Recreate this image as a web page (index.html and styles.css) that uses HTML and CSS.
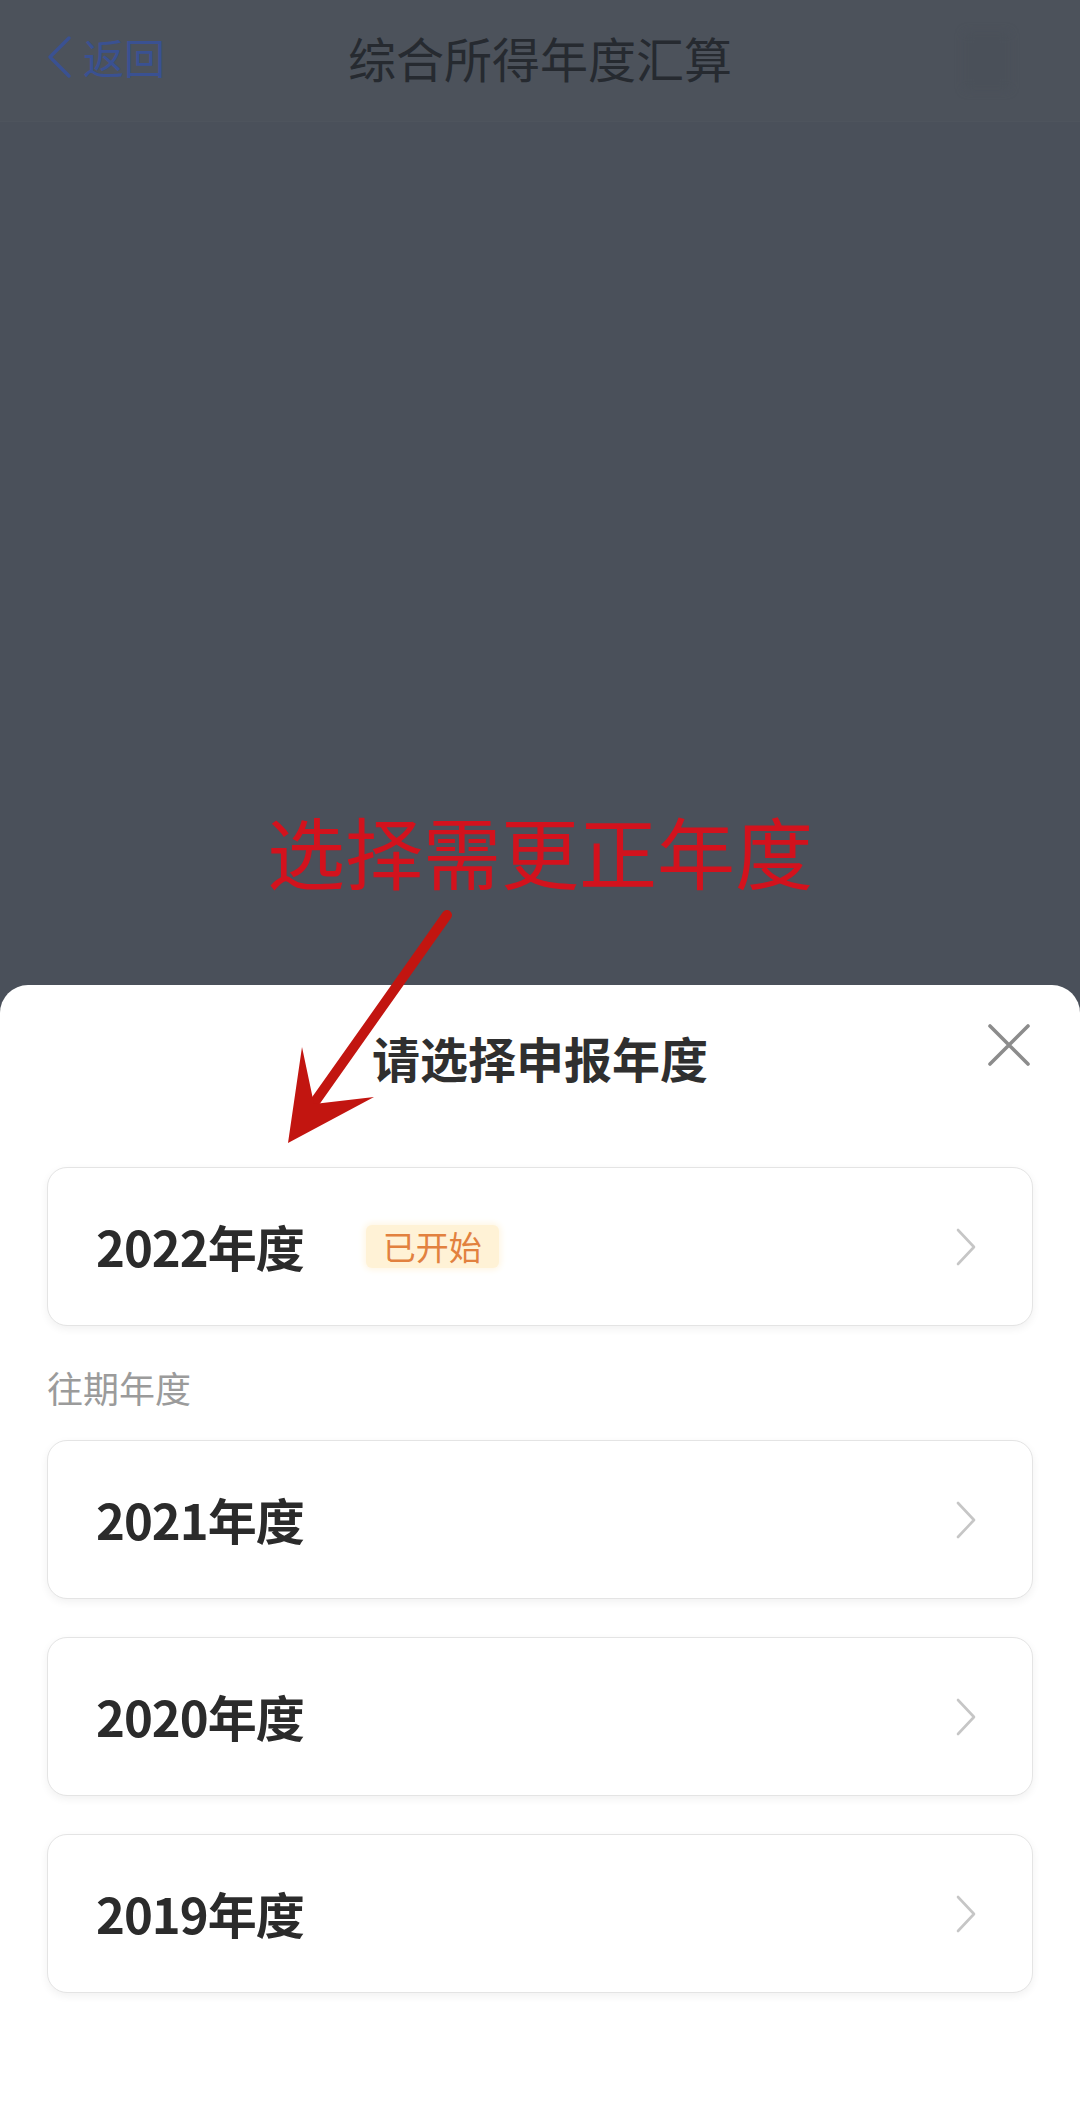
FILE: index.html
```html
<!DOCTYPE html>
<html lang="zh-CN">
<head>
<meta charset="utf-8">
<title>综合所得年度汇算</title>
<link rel="stylesheet" href="styles.css">
</head>
<body>
<div class="page">
  <header class="topbar">
    <div class="back">
      <svg class="back-icon" width="28" height="44" viewBox="0 0 28 44"><path d="M24 3 L5 22 L24 41" fill="none" stroke="currentColor" stroke-width="3.4" stroke-linecap="round" stroke-linejoin="round"/></svg>
      <span>返回</span>
    </div>
    <div class="nav-title">综合所得年度汇算</div>
    <div class="nav-right"><span class="ghost"></span></div>
  </header>
  <div class="dim">
    <div class="annotation">选择需更正年度</div>
  </div>
  <section class="sheet">
    <div class="sheet-head">
      <span></span>
      <h2 class="sheet-title">请选择申报年度</h2>
      <svg class="close" width="44" height="44" viewBox="0 0 44 44"><path d="M3 3 L41 41 M41 3 L3 41" stroke="#8c8c8c" stroke-width="3.6" stroke-linecap="round"/></svg>
    </div>
    <div class="card current">
      <div class="card-left"><span class="year">2022年度</span><span class="badge">已开始</span></div>
      <svg class="chev" width="20" height="38" viewBox="0 0 20 38"><path d="M2 2 L18 19 L2 36" fill="none" stroke="#c6c6c6" stroke-width="2.6" stroke-linecap="round" stroke-linejoin="round"/></svg>
    </div>
    <div class="section-label">往期年度</div>
    <div class="list">
      <div class="card">
        <div class="card-left"><span class="year">2021年度</span></div>
        <svg class="chev" width="20" height="38" viewBox="0 0 20 38"><path d="M2 2 L18 19 L2 36" fill="none" stroke="#c6c6c6" stroke-width="2.6" stroke-linecap="round" stroke-linejoin="round"/></svg>
      </div>
      <div class="card">
        <div class="card-left"><span class="year">2020年度</span></div>
        <svg class="chev" width="20" height="38" viewBox="0 0 20 38"><path d="M2 2 L18 19 L2 36" fill="none" stroke="#c6c6c6" stroke-width="2.6" stroke-linecap="round" stroke-linejoin="round"/></svg>
      </div>
      <div class="card">
        <div class="card-left"><span class="year">2019年度</span></div>
        <svg class="chev" width="20" height="38" viewBox="0 0 20 38"><path d="M2 2 L18 19 L2 36" fill="none" stroke="#c6c6c6" stroke-width="2.6" stroke-linecap="round" stroke-linejoin="round"/></svg>
      </div>
    </div>
  </section>
  <svg class="arrow" width="1080" height="2121" viewBox="0 0 1080 2121">
    <line x1="447" y1="915" x2="312" y2="1106" stroke="#c21510" stroke-width="10" stroke-linecap="round"/>
    <polygon points="288,1143 302,1047 314,1104 374,1097" fill="#c21510"/>
  </svg>
</div>
</body>
</html>
```
FILE: styles.css
```css
* { box-sizing: border-box; margin: 0; padding: 0; }
html, body { width: 1080px; height: 2121px; overflow: hidden; }
body {
  font-family: "Noto Sans CJK SC", "Noto Sans", sans-serif;
  background: #4a505a;
}
.page {
  position: relative;
  width: 1080px;
  height: 2121px;
  display: flex;
  flex-direction: column;
}
.topbar {
  height: 122px;
  background: #4c525b;
  display: grid;
  grid-template-columns: 1fr auto 1fr;
  align-items: center;
  padding: 0 45px;
  border-bottom: 1px solid #4e545d;
}
.back {
  display: flex;
  align-items: center;
  gap: 10px;
  color: #3a5192;
  font-size: 41px;
  line-height: 1;
  margin-top: -8px;
}
.back-icon { color: #3a5192; }
.nav-title {
  font-size: 48px;
  color: #262a30;
  line-height: 1;
  margin-top: -8px;
}
.nav-right { display: flex; justify-content: flex-end; padding-right: 25px; }
.ghost {
  width: 46px; height: 58px;
  background: rgba(72, 78, 86, 0.35);
  border-radius: 4px;
  filter: blur(5px);
}
.dim {
  height: 863px;
  padding-top: 689px;
  display: flex;
  justify-content: center;
}
.annotation {
  font-size: 78px;
  line-height: 1;
  color: #d3121d;
}
.sheet {
  flex: 1;
  background: #fff;
  border-radius: 28px 28px 0 0;
  padding: 0 47px;
  display: flex;
  flex-direction: column;
}
.sheet-head {
  height: 144px;
  display: grid;
  grid-template-columns: 1fr auto 1fr;
  align-items: center;
  margin-bottom: 38px;
}
.sheet-title {
  font-size: 48px;
  font-weight: 700;
  color: #2f2f2f;
  line-height: 1;
}
.close { justify-self: end; margin-right: 2px; margin-top: -24px; }
.card {
  height: 159px;
  background: #fff;
  border: 1.5px solid #e4e4e4;
  border-radius: 20px;
  box-shadow: 0 3px 8px rgba(0, 0, 0, 0.06);
  display: flex;
  align-items: center;
  justify-content: space-between;
  padding: 0 56px 0 48px;
}
.card-left { display: flex; align-items: center; gap: 62px; }
.year {
  font-size: 49px;
  font-weight: 700;
  color: #2b2b2b;
  line-height: 1;
  letter-spacing: -1px;
  margin-top: -3px;
}
.badge {
  font-size: 33px;
  line-height: 43px;
  height: 43px;
  padding: 0 17px;
  color: #e2813f;
  background: #fff2d6;
  border-radius: 6px;
  box-shadow: 0 0 6px 2px #fff6e4;
}
.section-label {
  font-size: 36px;
  line-height: 1;
  color: #9b9b9b;
  margin: 43px 0 35px;
}
.list { display: flex; flex-direction: column; gap: 38px; }
.arrow { position: absolute; top: 0; left: 0; pointer-events: none; }
```
